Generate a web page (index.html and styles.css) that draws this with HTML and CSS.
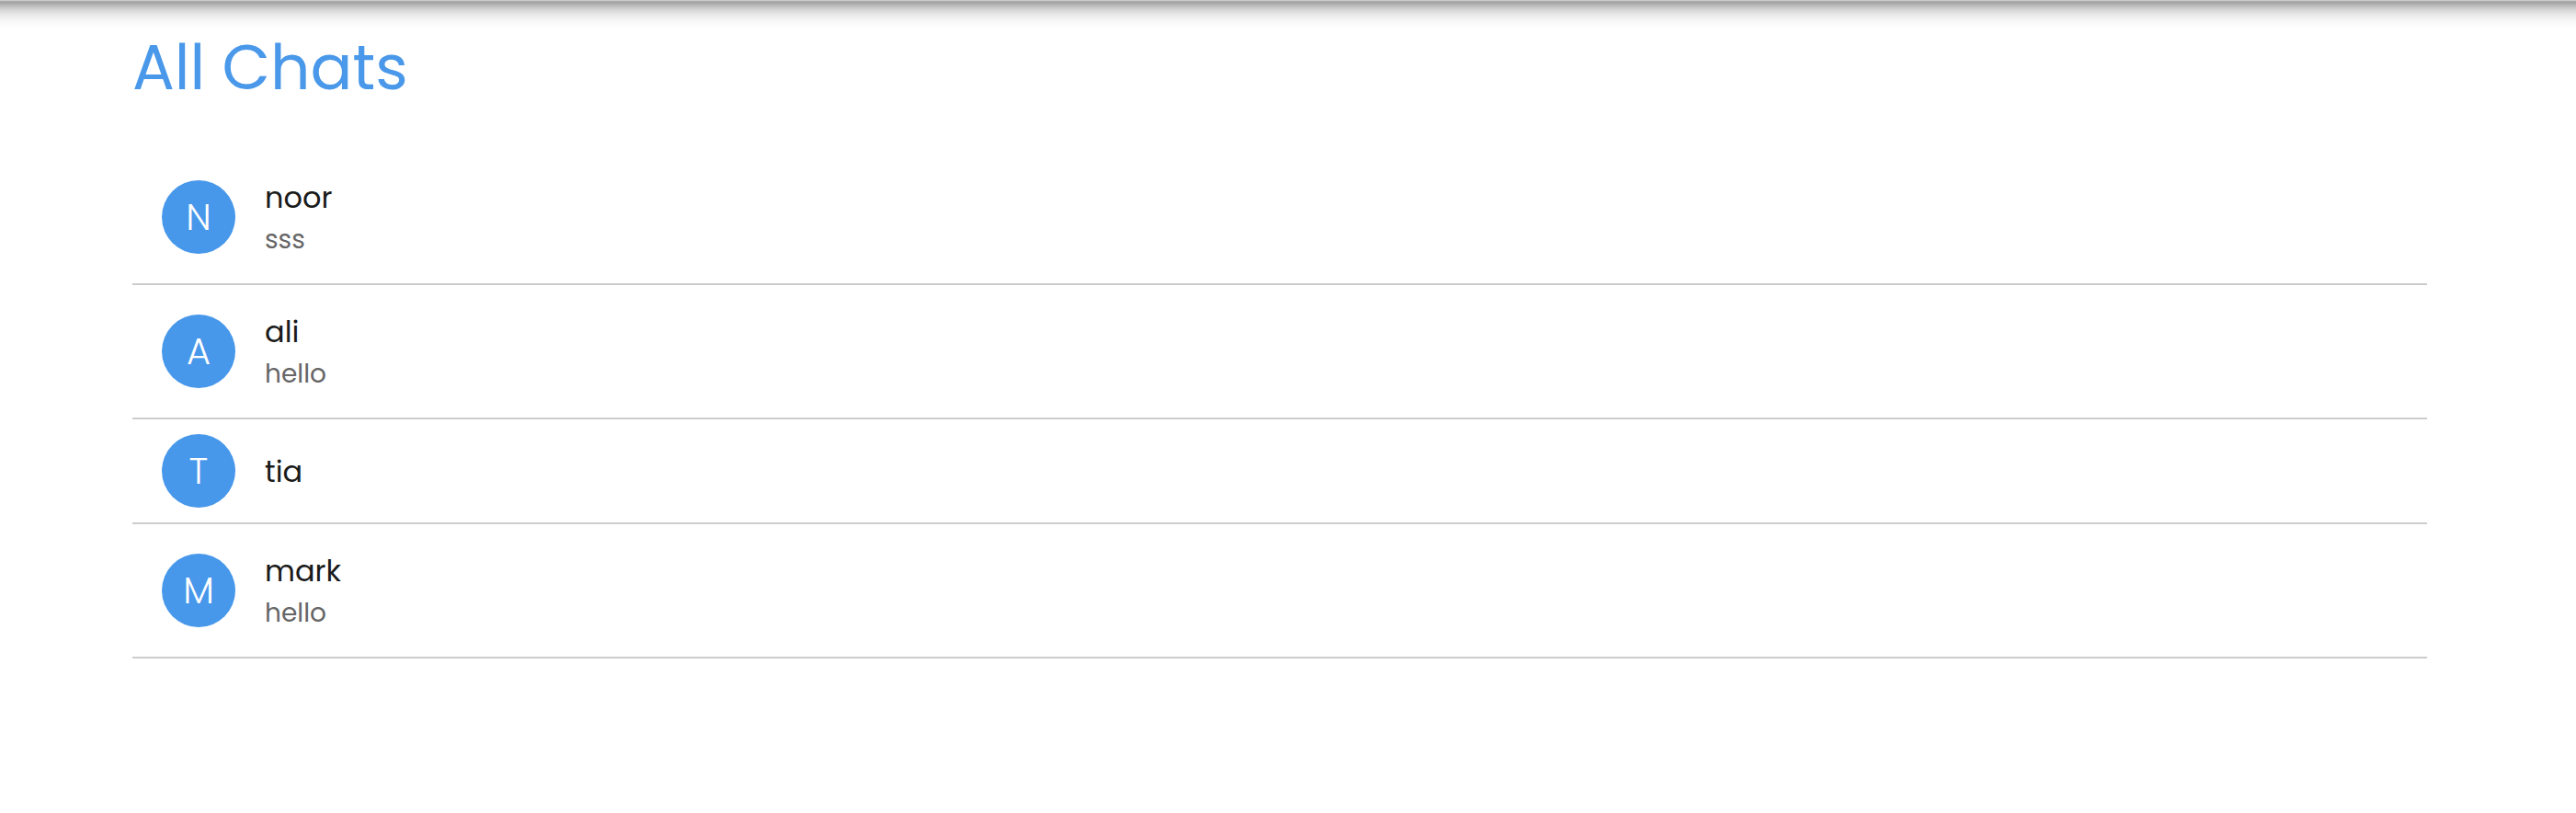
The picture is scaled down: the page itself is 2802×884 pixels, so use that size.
FILE: index.html
```html
<!DOCTYPE html>
<html lang="en">
<head>
<meta charset="utf-8">
<title>All Chats</title>
<link rel="stylesheet" href="styles.css">
</head>
<body>
<header class="topbar"></header>
<main class="page">
  <h1 class="title">All Chats</h1>
  <ul class="chat-list">
    <li class="chat">
      <div class="avatar">N</div>
      <div class="chat-text">
        <div class="chat-name">noor</div>
        <div class="chat-msg">sss</div>
      </div>
    </li>
    <li class="chat">
      <div class="avatar">A</div>
      <div class="chat-text">
        <div class="chat-name">ali</div>
        <div class="chat-msg">hello</div>
      </div>
    </li>
    <li class="chat">
      <div class="avatar">T</div>
      <div class="chat-text">
        <div class="chat-name">tia</div>
      </div>
    </li>
    <li class="chat">
      <div class="avatar">M</div>
      <div class="chat-text">
        <div class="chat-name">mark</div>
        <div class="chat-msg">hello</div>
      </div>
    </li>
  </ul>
</main>
</body>
</html>
```
FILE: styles.css
```css
* { box-sizing: border-box; }
html, body {
  margin: 0;
  padding: 0;
  background: #ffffff;
}
body {
  font-family: "Poppins", "Inter", "Noto Sans", sans-serif;
  color: #1f1f1f;
}
.topbar {
  height: 30px;
  background: linear-gradient(to bottom,
    #dadada 0px,
    #9e9e9e 2px,
    #b4b4b4 5px,
    #d2d2d2 10px,
    #e9e9e9 16px,
    #f7f7f7 23px,
    #ffffff 30px);
}
.page {
  padding: 1px 162px 0 144px;
}
.title {
  margin: 0 0 47px 0;
  font-size: 68px;
  line-height: 86px;
  font-weight: 400;
  color: #4a98e9;
}
.chat-list {
  list-style: none;
  margin: 0;
  padding: 0;
}
.chat {
  display: flex;
  align-items: center;
  gap: 32px;
  padding: 16px 32px;
  border-bottom: 2px solid #cccccc;
}
.avatar {
  width: 80px;
  height: 80px;
  flex: none;
  border-radius: 50%;
  background: #4797ea;
  color: #ffffff;
  display: flex;
  align-items: center;
  justify-content: center;
  font-size: 40px;
  font-weight: 300;
}
.chat-text {
  display: flex;
  flex-direction: column;
  gap: 4px;
  padding: 12px 0 12px;
}
.chat-name {
  font-size: 32px;
  line-height: 45px;
  color: #1a1a1a;
}
.chat-msg {
  font-size: 28px;
  line-height: 39px;
  color: #666666;
}
```
